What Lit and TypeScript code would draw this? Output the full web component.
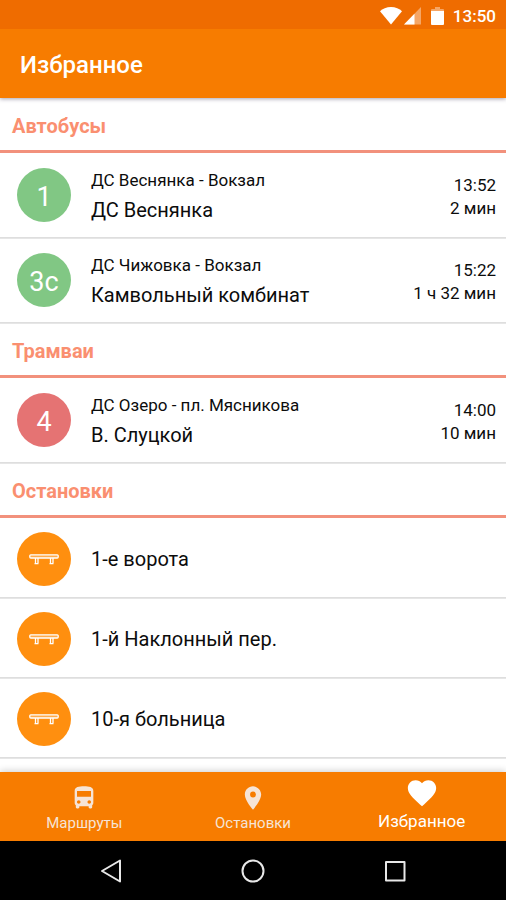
import { LitElement, html, css, svg, TemplateResult } from "lit";
import { customElement, property, state } from "lit/decorators.js";
import { classMap } from "lit/directives/class-map.js";

interface Trip {
  route: string;
  kind: "bus" | "tram";
  line: string;
  stop: string;
  time: string;
  wait: string;
}

const buses: Trip[] = [
  { route: "1", kind: "bus", line: "ДС Веснянка - Вокзал", stop: "ДС Веснянка", time: "13:52", wait: "2 мин" },
  { route: "3с", kind: "bus", line: "ДС Чижовка - Вокзал", stop: "Камвольный комбинат", time: "15:22", wait: "1 ч 32 мин" },
];
const trams: Trip[] = [
  { route: "4", kind: "tram", line: "ДС Озеро - пл. Мясникова", stop: "В. Слуцкой", time: "14:00", wait: "10 мин" },
];
const stops = ["1-е ворота", "1-й Наклонный пер.", "10-я больница"];

const base = css`
  :host {
    display: block;
    font-family: Roboto, "Noto Sans", sans-serif;
  }
  * {
    box-sizing: border-box;
  }
  svg {
    display: block;
    fill: currentColor;
  }
  button {
    font: inherit;
    color: inherit;
    background: none;
    border: 0;
    padding: 0;
    margin: 0;
    cursor: pointer;
  }
`;

@customElement("status-bar")
export class StatusBar extends LitElement {
  static styles = [
    base,
    css`
      .bar {
        display: flex;
        align-items: center;
        justify-content: flex-end;
        height: 29px;
        padding: 2px 10px 0 0;
        background: #ef6c00;
        color: #fff;
        font-size: 17px;
        font-weight: 500;
        line-height: 20px;
      }
      .battery {
        margin: 0 9px 0 10px;
      }
    `,
  ];
  render() {
    return html`<div class="bar">
      <svg width="22" height="18" viewBox="0 0 22 18" aria-label="Wi-Fi"><path d="M11 17.500 0 4.200C2.500 1.700 6.500 0 11 0s8.500 1.700 11 4.200z" /></svg>
      <svg width="19" height="18" viewBox="0 0 19 18" aria-label="Сигнал">
        <path d="M19 0v17.500H2z" opacity=".4" /><path d="M12.500 6.700v10.800H2z" />
      </svg>
      <svg class="battery" width="13" height="18" viewBox="0 0 13 18" aria-label="Батарея">
        <path d="M4 0h5v2h3a1 1 0 0 1 1 1v2H0V3a1 1 0 0 1 1-1h3z" opacity=".4" />
        <path d="M0 4h13v13a1 1 0 0 1-1 1H1a1 1 0 0 1-1-1z" />
      </svg>
      <span>13:50</span>
    </div>`;
  }
}

const bench = svg`<g fill="none" stroke="#fff" stroke-width="1.300">
  <rect x="0.800" y="0.800" width="28.400" height="3.200" rx="1" fill="#fff" fill-opacity=".25" />
  <path d="M6.500 4v5.200M9 4v5.200M5.500 9.600h4M21.500 4v5.200M24 4v5.200M20.500 9.600h4" />
</g>`;

@customElement("favorite-section")
export class FavoriteSection extends LitElement {
  @property() heading = "";
  @property({ attribute: false }) trips: Trip[] = [];
  @property({ attribute: false }) stops: string[] = [];

  static styles = [
    base,
    css`
      .heading {
        margin: 0;
        height: 55px;
        padding: 0 12px;
        border-bottom: 3px solid #f2917c;
        font-size: 20px;
        font-weight: 700;
        line-height: 56px;
        color: #fa8f70;
      }
      .list {
        list-style: none;
        margin: 0;
        padding: 0;
      }
      .item {
        border-bottom: 1px solid #dedede;
        box-shadow: 0 1px 0 #e6e6e6;
      }
      .row {
        display: flex;
        align-items: center;
        gap: 20px;
        width: 100%;
        padding: 15px 10px 15px 17px;
        text-align: left;
        color: #0c0c0c;
      }
      .row.place {
        padding-top: 14px;
        padding-bottom: 11px;
      }
      .disc {
        flex: none;
        display: grid;
        place-items: center;
        width: 54px;
        height: 54px;
        border-radius: 50%;
        color: #fff;
        font-size: 27px;
        line-height: 32px;
      }
      .bus,
      .tram {
        padding-top: 3px;
      }
      .bus {
        background: #81c784;
      }
      .tram {
        background: #e57373;
      }
      .stop {
        background: #ff8f0f;
      }
      .names {
        flex: 1;
        min-width: 0;
        display: grid;
        gap: 6px;
      }
      .line {
        font-size: 17px;
        line-height: 24px;
      }
      .name {
        font-size: 20px;
        line-height: 24px;
      }
      .times {
        padding-top: 3px;
        text-align: right;
        font-size: 17px;
        line-height: 23px;
      }
      .times span {
        display: block;
      }
    `,
  ];

  render() {
    return html`<section>
      <h2 class="heading">${this.heading}</h2>
      <ul class="list">
        ${this.trips.map(
          (t) => html`<li class="item">
            <button class="row">
              <span class=${classMap({ disc: true, [t.kind]: true })}>${t.route}</span>
              <span class="names"><span class="line">${t.line}</span><span class="name">${t.stop}</span></span>
              <span class="times"><span>${t.time}</span><span>${t.wait}</span></span>
            </button>
          </li>`
        )}
        ${this.stops.map(
          (s) => html`<li class="item">
            <button class="row place">
              <span class="disc stop"><svg width="30" height="11" viewBox="0 0 30 11">${bench}</svg></span>
              <span class="name">${s}</span>
            </button>
          </li>`
        )}
      </ul>
    </section>`;
  }
}

@customElement("tab-bar")
export class TabBar extends LitElement {
  @state() private active = 2;

  private tabs: { label: string; icon: TemplateResult }[] = [
    {
      label: "Маршруты",
      icon: html`<svg class="icon" viewBox="0 0 24 24"><path d="M4 16c0 .88.39 1.670 1 2.220V20c0 .55.45 1 1 1h1c.55 0 1-.45 1-1v-1h8v1c0 .55.45 1 1 1h1c.55 0 1-.45 1-1v-1.780c.61-.55 1-1.340 1-2.220V6c0-3.500-3.580-4-8-4s-8 .5-8 4v10zm3.500 1c-.83 0-1.500-.67-1.500-1.500S6.670 14 7.500 14s1.500.67 1.500 1.500S8.330 17 7.500 17zm9 0c-.83 0-1.500-.67-1.500-1.500s.67-1.500 1.500-1.500 1.500.67 1.500 1.500-.67 1.500-1.500 1.500zm1.500-6H6V6h12v5z" /></svg>`,
    },
    {
      label: "Остановки",
      icon: html`<svg class="icon" viewBox="0 0 24 24"><path d="M12 2C8.130 2 5 5.130 5 9c0 5.250 7 13 7 13s7-7.750 7-13c0-3.870-3.130-7-7-7zm0 9.500a2.500 2.500 0 0 1 0-5 2.500 2.500 0 0 1 0 5z" /></svg>`,
    },
    {
      label: "Избранное",
      icon: html`<svg class="icon" viewBox="0 0 24 24"><path d="M12 21.350l-1.450-1.320C5.400 15.360 2 12.280 2 8.500 2 5.420 4.420 3 7.500 3c1.740 0 3.410.81 4.500 2.090C13.090 3.810 14.760 3 16.500 3 19.580 3 22 5.420 22 8.500c0 3.780-3.400 6.860-8.550 11.540L12 21.350z" /></svg>`,
    },
  ];

  static styles = [
    base,
    css`
      .bar {
        display: grid;
        grid-template-columns: repeat(3, 1fr);
        height: 69px;
        background: #f77c00;
      }
      .tab {
        display: flex;
        flex-direction: column;
        align-items: center;
        justify-content: flex-end;
        gap: 1px;
        padding-bottom: 8px;
        color: #f6e4d6;
        font-size: 15px;
        line-height: 20px;
      }
      .icon {
        width: 28px;
        height: 28px;
      }
      .active {
        padding-bottom: 10px;
        color: #fff;
        font-size: 17px;
      }
      .active .icon {
        width: 34px;
        height: 34px;
      }
    `,
  ];

  render() {
    return html`<nav class="bar">
      ${this.tabs.map(
        (t, i) => html`<button class=${classMap({ tab: true, active: i === this.active })} @click=${() => (this.active = i)}>
          ${t.icon}<span>${t.label}</span>
        </button>`
      )}
    </nav>`;
  }
}

@customElement("system-bar")
export class SystemBar extends LitElement {
  static styles = [
    base,
    css`
      .bar {
        display: grid;
        grid-template-columns: repeat(3, 1fr);
        height: 59px;
        padding: 0 40px;
        background: #000;
        color: #e8e8e8;
      }
      .key {
        display: grid;
        place-items: center;
      }
      svg {
        fill: none;
        stroke: currentColor;
        stroke-width: 2;
        stroke-linejoin: round;
      }
    `,
  ];
  render() {
    return html`<div class="bar">
      <button class="key" aria-label="Назад"><svg width="24" height="24" viewBox="0 0 24 24"><path d="M21 1.500v21L3 12z" /></svg></button>
      <button class="key" aria-label="Домой"><svg width="24" height="24" viewBox="0 0 24 24"><circle cx="12" cy="12" r="10.500" /></svg></button>
      <button class="key" aria-label="Обзор"><svg width="24" height="24" viewBox="0 0 24 24"><rect x="3" y="3" width="18.500" height="18.500" /></svg></button>
    </div>`;
  }
}

@customElement("app-root")
export class AppRoot extends LitElement {
  static styles = [
    base,
    css`
      .screen {
        display: flex;
        flex-direction: column;
        height: 100vh;
        background: #fff;
      }
      .title-bar {
        z-index: 1;
        flex: none;
        background: #f77c00;
        box-shadow: 0 1px 4px rgba(30, 20, 60, 0.4);
        color: #fff;
      }
      .title {
        margin: 0;
        padding: 2px 20px 0;
        height: 69px;
        font-size: 24px;
        font-weight: 500;
        line-height: 69px;
      }
      .content {
        flex: 1;
        min-height: 0;
        overflow: hidden auto;
      }
      .tabs {
        flex: none;
        z-index: 1;
        box-shadow: 0 -1px 7px rgba(0, 0, 0, 0.2);
      }
      .system {
        flex: none;
        z-index: 2;
      }
    `,
  ];

  render() {
    return html`<div class="screen">
      <header class="title-bar">
        <status-bar></status-bar>
        <h1 class="title">Избранное</h1>
      </header>
      <main class="content">
        <favorite-section heading="Автобусы" .trips=${buses}></favorite-section>
        <favorite-section heading="Трамваи" .trips=${trams}></favorite-section>
        <favorite-section heading="Остановки" .stops=${stops}></favorite-section>
      </main>
      <tab-bar class="tabs"></tab-bar>
      <system-bar class="system"></system-bar>
    </div>`;
  }
}
